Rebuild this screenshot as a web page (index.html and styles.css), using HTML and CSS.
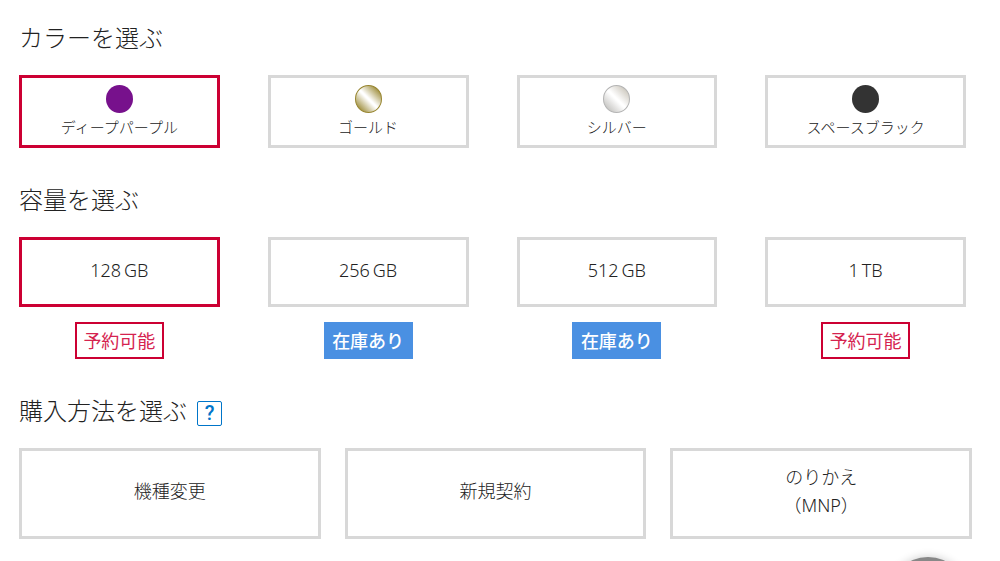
FILE: index.html
```
<!DOCTYPE html>
<html lang="ja">
<head>
  <meta charset="UTF-8" />
  <meta name="viewport" content="width=device-width, initial-scale=1.0" />
  <title>カラーを選ぶ</title>
  <link rel="stylesheet" href="styles.css">
</head>
<body>

  <section class="step">
    <h2>カラーを選ぶ</h2>
    <div class="options four colors">
      <button type="button" class="option selected"><span class="swatch purple"></span>ディープパープル</button>
      <button type="button" class="option"><span class="swatch gold"></span>ゴールド</button>
      <button type="button" class="option"><span class="swatch silver"></span>シルバー</button>
      <button type="button" class="option"><span class="swatch black"></span>スペースブラック</button>
    </div>
  </section>

  <section class="step">
    <h2>容量を選ぶ</h2>
    <div class="options four sizes">
      <div class="size">
        <button type="button" class="option selected"><span>128</span><span>GB</span></button>
        <span class="stock reserve">予約可能</span>
      </div>
      <div class="size">
        <button type="button" class="option"><span>256</span><span>GB</span></button>
        <span class="stock available">在庫あり</span>
      </div>
      <div class="size">
        <button type="button" class="option"><span>512</span><span>GB</span></button>
        <span class="stock available">在庫あり</span>
      </div>
      <div class="size">
        <button type="button" class="option"><span>1</span><span>TB</span></button>
        <span class="stock reserve">予約可能</span>
      </div>
    </div>
  </section>

  <section class="step">
    <h2>購入方法を選ぶ <button type="button" class="help">?</button></h2>
    <div class="options three methods">
      <button type="button" class="option">機種変更</button>
      <button type="button" class="option">新規契約</button>
      <button type="button" class="option">のりかえ<br>（MNP）</button>
    </div>
  </section>

  <div class="float-circle"></div>

  <script>
    // One selected option per group
    document.querySelectorAll(".options").forEach(function(group) {
      const buttons = group.querySelectorAll(".option");
      buttons.forEach(function(btn) {
        btn.addEventListener("click", function() {
          buttons.forEach(function(b) { b.classList.remove("selected"); });
          btn.classList.add("selected");
        });
      });
    });
  </script>

</body>
</html>
```
FILE: styles.css
```
* {
  box-sizing: border-box;
}
body {
  margin: 0;
  padding: 20px 28px 20px 19px;
  background: #fff;
  color: #222;
  font-family: "Noto Sans", "Noto Sans CJK JP", sans-serif;
  font-size: 18px;
  font-weight: 300;
}
.step {
  margin-bottom: 34px;
}
.step:last-of-type {
  margin-bottom: 0;
}
h2 {
  display: flex;
  align-items: flex-end;
  gap: 10px;
  height: 36px;
  margin: 0 0 19px;
  font-size: 24px;
  font-weight: 300;
  line-height: 36px;
}
.options {
  display: grid;
}
.four {
  grid-template-columns: repeat(4, 1fr);
  gap: 48px;
  margin-right: 6px;
}
.three {
  grid-template-columns: repeat(3, 1fr);
  gap: 24px;
}
.option {
  display: block;
  width: 100%;
  padding: 0;
  border: 3px solid #d8d8d8;
  background: #fff;
  color: #222;
  font: inherit;
  line-height: 28px;
  cursor: pointer;
}
.option.selected {
  border-color: #cc0033;
}

/* colors */
.colors .option {
  display: flex;
  flex-direction: column;
  align-items: center;
  height: 73px;
  padding-top: 7px;
  font-size: 15px;
  line-height: 28px;
}
.swatch {
  flex: none;
  width: 27px;
  height: 28px;
  border-radius: 50%;
}
.purple {
  background: #77118c;
}
.gold {
  border: 1px solid #97852f;
  background: linear-gradient(45deg, #a09040 12%, #fff 48%, #fff 52%, #a09040 88%);
}
.silver {
  border: 1px solid #b4b4b4;
  background: linear-gradient(45deg, #c2c1be 10%, #fff 48%, #fff 52%, #cbc6bc 90%);
}
.black {
  background: #333;
}

/* storage */
.size {
  display: flex;
  flex-direction: column;
  align-items: center;
  gap: 15px;
}
.sizes .option {
  display: flex;
  align-items: center;
  justify-content: center;
  gap: 3px;
  height: 70px;
  padding-bottom: 4px;
}
.stock {
  width: 89px;
  height: 37px;
  border: 2px solid #cc0033;
  font-size: 18px;
  font-weight: 400;
  line-height: 34px;
  text-align: center;
}
.reserve {
  color: #d5234f;
}
.available {
  border-color: #4a90e2;
  background: #4a90e2;
  color: #fff;
  font-weight: 500;
}

/* purchase method */
.methods .option {
  height: 91px;
  padding-bottom: 6px;
}
.help {
  width: 25px;
  height: 25px;
  margin-bottom: 3px;
  padding: 0;
  border: 1px solid #0075c9;
  border-radius: 2px;
  background: #fff;
  color: #0075c9;
  font-family: Roboto, sans-serif;
  font-size: 20px;
  font-weight: 500;
  line-height: 23px;
  cursor: pointer;
}

/* pinned to the bottom edge, mostly off screen */
.float-circle {
  position: fixed;
  right: 32px;
  bottom: -76px;
  width: 80px;
  height: 80px;
  border-radius: 50%;
  background: #888;
  box-shadow: 0 0 10px rgba(0, 0, 0, 0.2);
}
```
